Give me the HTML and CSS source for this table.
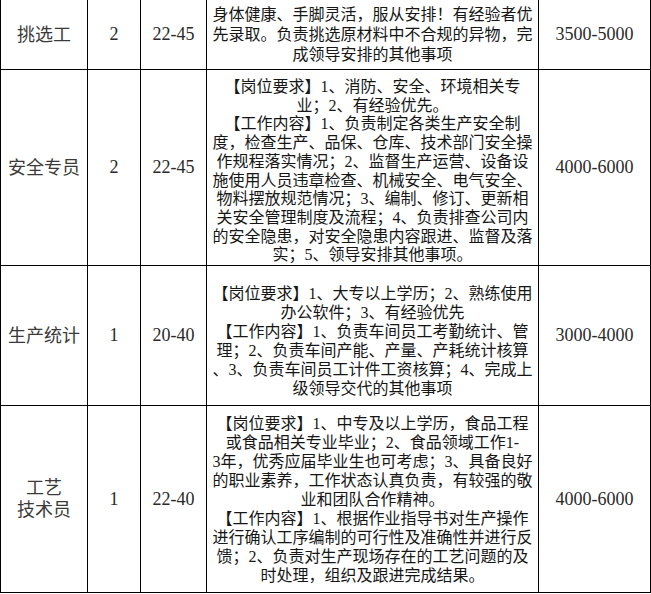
FILE: index.html
```html
<!DOCTYPE html>
<html lang="zh-CN">
<head>
<meta charset="utf-8">
<title>招聘岗位</title>
<link rel="stylesheet" href="styles.css">
</head>
<body>
<div class="grid">
  <div class="cell title">挑选工</div>
  <div class="cell num">2</div>
  <div class="cell num">22-45</div>
  <div class="cell desc r1">身体健康、手脚灵活，服从安排！有经验者优<br>先录取。负责挑选原材料中不合规的异物，完<br>成领导安排的其他事项</div>
  <div class="cell num">3500-5000</div>

  <div class="cell title">安全专员</div>
  <div class="cell num">2</div>
  <div class="cell num">22-45</div>
  <div class="cell desc r2">【岗位要求】1、消防、安全、环境相关专<br>业；2、有经验优先。<br>【工作内容】1、负责制定各类生产安全制<br>度，检查生产、品保、仓库、技术部门安全操<br>作规程落实情况；2、监督生产运营、设备设<br>施使用人员违章检查、机械安全、电气安全、<br>物料摆放规范情况；3、编制、修订、更新相<br>关安全管理制度及流程；4、负责排查公司内<br>的安全隐患，对安全隐患内容跟进、监督及落<br>实；5、领导安排其他事项。</div>
  <div class="cell num">4000-6000</div>

  <div class="cell title">生产统计</div>
  <div class="cell num">1</div>
  <div class="cell num">20-40</div>
  <div class="cell desc r3">【岗位要求】1、大专以上学历；2、熟练使用<br>办公软件；3、有经验优先<br>【工作内容】1、负责车间员工考勤统计、管<br>理；2、负责车间产能、产量、产耗统计核算<br>、3、负责车间员工计件工资核算；4、完成上<br>级领导交代的其他事项</div>
  <div class="cell num">3000-4000</div>

  <div class="cell title two">工艺<br>技术员</div>
  <div class="cell num">1</div>
  <div class="cell num">22-40</div>
  <div class="cell desc r4">【岗位要求】1、中专及以上学历，食品工程<br>或食品相关专业毕业；2、食品领域工作1-<br>3年，优秀应届毕业生也可考虑；3、具备良好<br>的职业素养，工作状态认真负责，有较强的敬<br>业和团队合作精神。<br>【工作内容】1、根据作业指导书对生产操作<br>进行确认工序编制的可行性及准确性并进行反<br>馈；2、负责对生产现场存在的工艺问题的及<br>时处理，组织及跟进完成结果。</div>
  <div class="cell num">4000-6000</div>
</div>
</body>
</html>
```

FILE: styles.css
```css
html, body {
  margin: 0;
  padding: 0;
  background: #fff;
}

body {
  width: 651px;
  height: 594px;
  overflow: hidden;
  font-family: "Liberation Serif", "Noto Sans CJK SC", serif;
  color: #1c1c1c;
}

.grid {
  display: grid;
  grid-template-columns: 86px 52px 65px 331px 111px;
  grid-template-rows: 69px 195px 139px 186px;
  gap: 1px;
  padding: 0 1px 1px 1px;
  background: #000;
  width: 651px;
  box-sizing: border-box;
}

.cell {
  background: #fff;
  display: flex;
  align-items: center;
  justify-content: center;
  text-align: center;
  white-space: nowrap;
  text-spacing-trim: space-all;
}

.title {
  font-size: 18px;
  color: #3a3a3a;
  line-height: 22px;
}

.num {
  font-size: 18px;
  color: #2a2a2a;
}

.desc {
  font-size: 16px;
  line-height: 19px;
  color: #161616;
}

.r1 {
  line-height: 20px;
}

.r2 {
  line-height: 18.7px;
  padding-top: 8px;
  box-sizing: border-box;
}

.r3 {
  padding-top: 10px;
  box-sizing: border-box;
}
```
